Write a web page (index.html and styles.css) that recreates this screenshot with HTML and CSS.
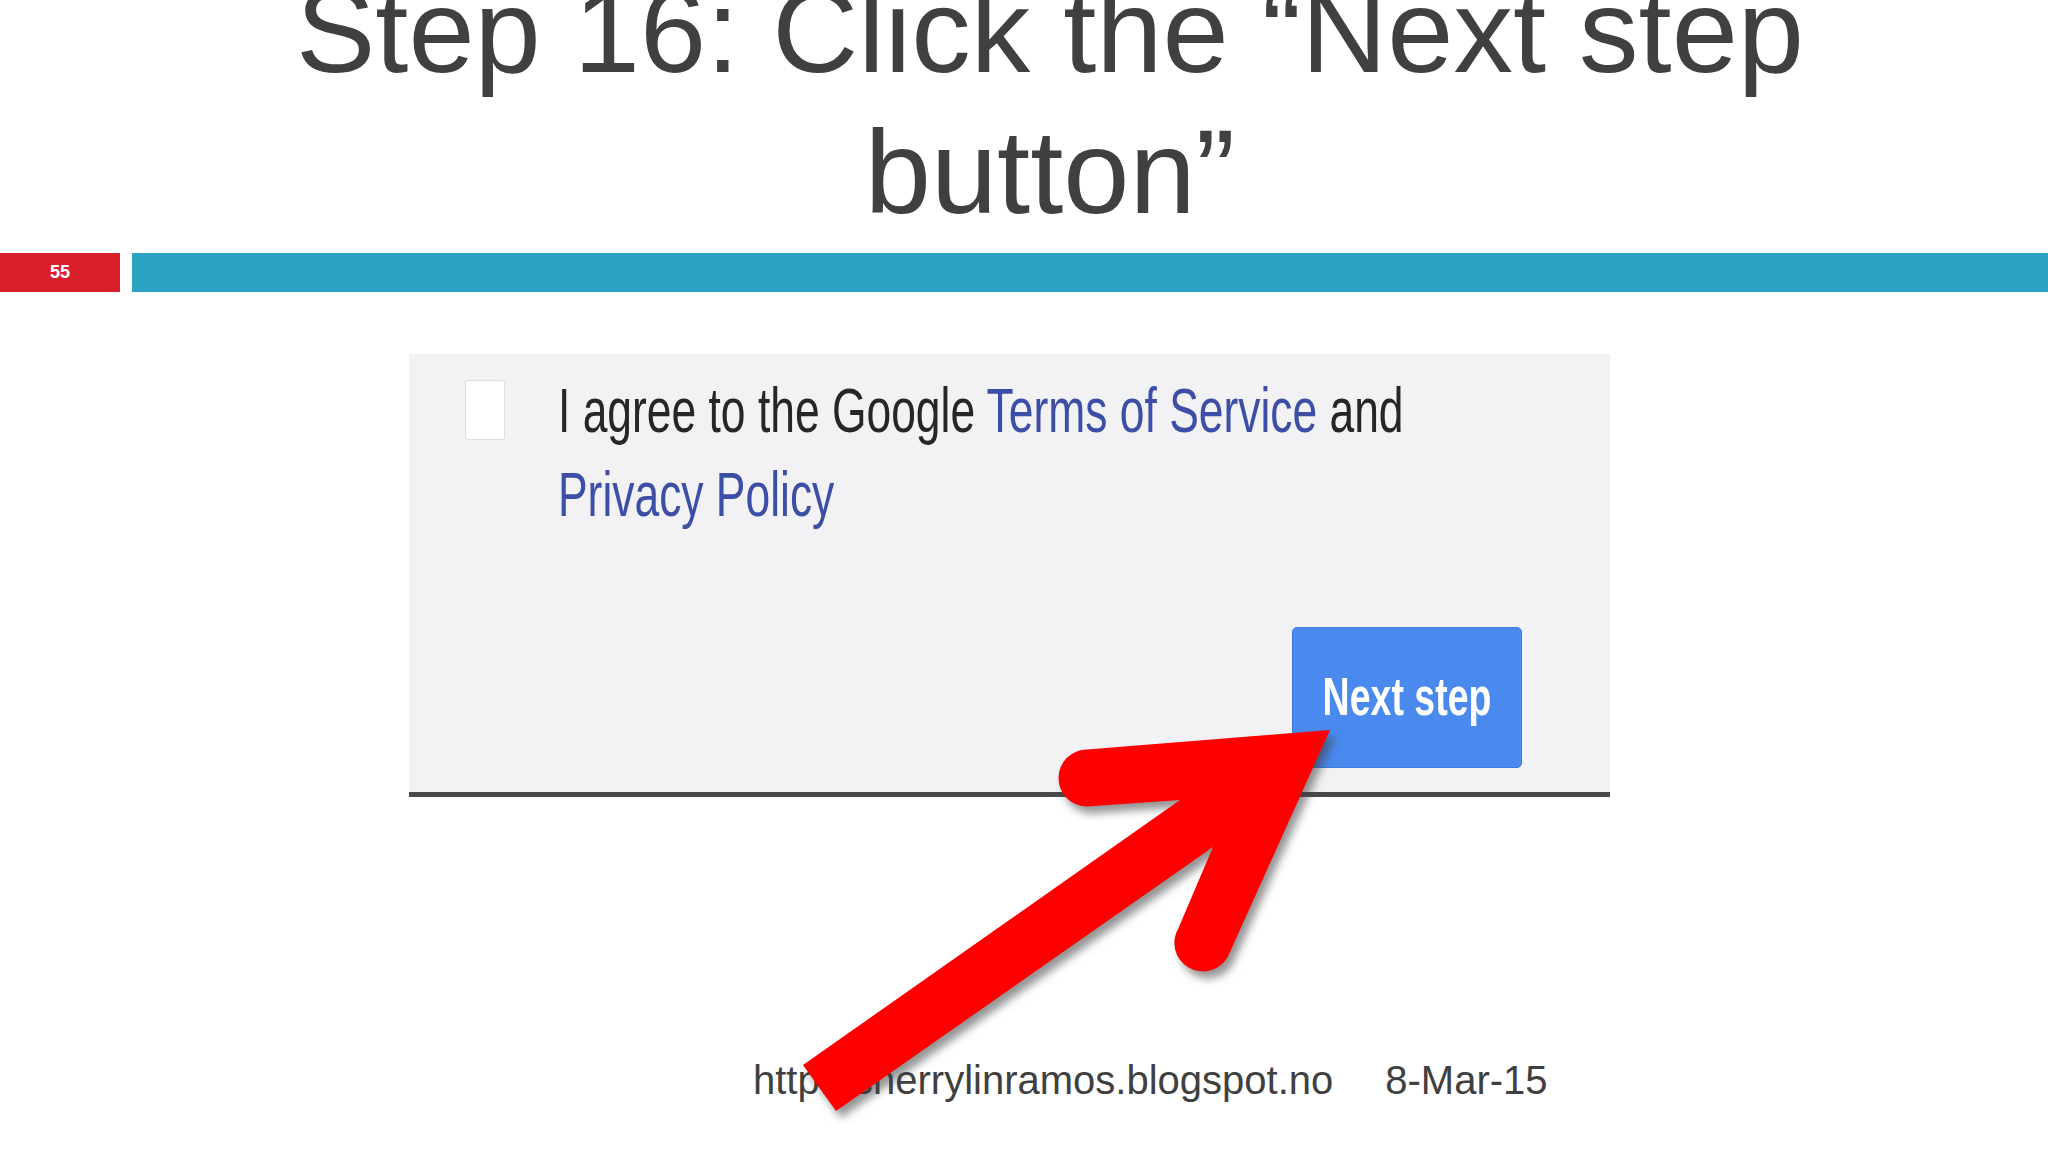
FILE: index.html
```html
<!DOCTYPE html>
<html lang="en">
  <head>
    <meta charset="UTF-8" />
    <meta name="viewport" content="width=device-width, initial-scale=1" />
    <title>Step 16: Click the “Next step button”</title>
    <link rel="stylesheet" href="styles.css">
  </head>
  <body>
    <h1 class="title">Step 16: Click the “Next step button”</h1>

    <div class="rule">
      <div class="slide-num">55</div>
      <div class="rule-line"></div>
    </div>

    <div class="shot">
      <div class="agree">
        <div class="checkbox"></div>
        <p class="agree-text">
          I agree to the Google <a href="#">Terms of Service</a> and<br>
          <a href="#">Privacy Policy</a>
        </p>
      </div>
      <div class="actions">
        <button class="next-btn"><span>Next step</span></button>
      </div>
    </div>

    <div class="footer">
      <span>http://cherrylinramos.blogspot.no</span>
      <span>8-Mar-15</span>
    </div>

    <!-- red annotation arrow pointing at the button -->
    <svg class="arrow" width="2048" height="1152" viewBox="0 0 2048 1152">
      <path d="M1330 730 L1087 749.5 A28.5 28.5 0 0 0 1087 806.5 L1180 800 L803 1065 L836 1111 L1213 847 L1178.5 928 A28.5 28.5 0 0 0 1227.5 957.6 Z" />
    </svg>
  </body>
</html>
```

FILE: styles.css
```css
body {
  margin: 0;
  width: 2048px;
  height: 1152px;
  overflow: hidden;
  position: relative;
  background: #fff;
  font-family: "Liberation Sans", Arial, sans-serif;
}
.title {
  width: 1600px;
  margin: -40px 0 0 250px;
  text-align: center;
  font-size: 119px;
  line-height: 141px;
  font-weight: normal;
  color: #404040;
}
.rule {
  display: flex;
  gap: 12px;
  height: 39px;
  margin-top: 11px;
}
.slide-num {
  width: 120px;
  background: #d91f2b;
  color: #fff;
  font-weight: bold;
  font-size: 18px;
  display: flex;
  align-items: center;
  justify-content: center;
}
.rule-line {
  flex: 1;
  background: #2ba2c1;
}
.shot {
  margin: 62px 0 0 409px;
  width: 1201px;
  height: 443px;
  box-sizing: border-box;
  background: #f2f2f4;
  border-bottom: 5px solid #4a4a4a;
  padding: 26px 88px 24px 56px;
  display: flex;
  flex-direction: column;
}
.agree {
  display: flex;
}
.checkbox {
  width: 40px;
  height: 60px;
  box-sizing: border-box;
  background: #fff;
  border: 1px solid #dedee2;
  border-radius: 3px;
}
.agree-text {
  margin: -10px 0 0 53px;
  font-size: 44.4px;
  line-height: 58.5px;
  color: #262626;
  transform: scaleY(1.42);
  transform-origin: top left;
}
.agree-text a {
  color: #3c4ea6;
  text-decoration: none;
}
.actions {
  margin-top: auto;
  display: flex;
  justify-content: flex-end;
}
.next-btn {
  width: 230px;
  height: 141px;
  border: 1px solid #3d7ae2;
  border-radius: 5px;
  background: #4a89ee;
  color: #fff;
  font-family: "Liberation Sans", Arial, sans-serif;
  font-weight: bold;
  font-size: 37.5px;
  padding: 0;
}
.next-btn span {
  display: inline-block;
  transform: scaleY(1.42);
}
.footer {
  display: flex;
  gap: 52px;
  margin-top: 261px;
  padding-left: 753px;
  font-size: 40px;
  color: #404040;
}
.arrow {
  position: absolute;
  top: 0;
  left: 0;
  pointer-events: none;
}
.arrow path {
  fill: #fe0000;
  filter: drop-shadow(5px 7px 4px rgba(60, 60, 60, 0.55));
}
```
